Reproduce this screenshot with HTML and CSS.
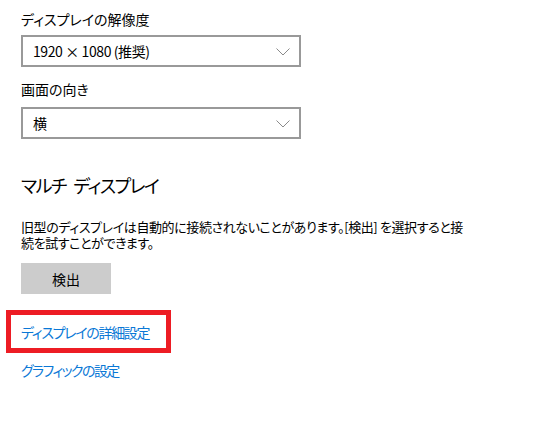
FILE: index.html
```html
<!DOCTYPE html>
<html lang="ja">
<head>
<meta charset="utf-8">
<link rel="stylesheet" href="styles.css">
</head>
<body>
<main class="page">
  <div class="field-label">ディスプレイの解像度</div>
  <div class="select first">
    <span class="select-value">1920 × 1080 (推奨)</span>
    <svg class="chevron" width="14" height="8" viewBox="0 0 14 8"><path d="M0.5 0.5 L7 7 L13.5 0.5" fill="none" stroke="#8a8a8a" stroke-width="1"/></svg>
  </div>
  <div class="field-label second">画面の向き</div>
  <div class="select">
    <span class="select-value">横</span>
    <svg class="chevron" width="14" height="8" viewBox="0 0 14 8"><path d="M0.5 0.5 L7 7 L13.5 0.5" fill="none" stroke="#8a8a8a" stroke-width="1"/></svg>
  </div>
  <h2 class="heading">マルチ ディスプレイ</h2>
  <p class="desc">旧型のディスプレイは自動的に接続されないことがあります。[検出] を選択すると接<br>続を試すことができます。</p>
  <button class="btn">検出</button>
  <div class="highlight">
    <a class="link" href="#">ディスプレイの詳細設定</a>
  </div>
  <a class="link plain" href="#">グラフィックの設定</a>
</main>
</body>
</html>
```
FILE: styles.css
```css
html, body {
  margin: 0;
  padding: 0;
  background: #ffffff;
}
body {
  font-family: "Noto Sans CJK JP", "Noto Sans", sans-serif;
  font-feature-settings: "palt";
  color: #000000;
  font-size: 14px;
}
.page {
  padding: 9px 0 0 21px;
  display: flex;
  flex-direction: column;
  align-items: flex-start;
}
.field-label {
  font-size: 14px;
  line-height: 20px;
  height: 20px;
}
.field-label.second {
  margin-top: 12px;
}
.select {
  margin-top: 8px;
  box-sizing: border-box;
  width: 280px;
  height: 32px;
  border: 2px solid #999999;
  display: flex;
  align-items: center;
  justify-content: space-between;
  padding: 0 9px 0 10px;
}
.select.first {
  margin-top: 6px;
}
.select-value {
  font-size: 14px;
  line-height: 20px;
  letter-spacing: -0.4px;
}
.chevron {
  display: block;
  margin-top: 1px;
}
.heading {
  margin: 32px 0 0;
  font-size: 18px;
  font-weight: normal;
  line-height: 28px;
  letter-spacing: -1.5px;
  word-spacing: 5px;
}
.desc {
  margin: 20px 0 0;
  font-size: 13px;
  line-height: 16px;
  letter-spacing: -0.4px;
}
.btn {
  margin-top: 12px;
  width: 90px;
  height: 31px;
  border: none;
  background: #cccccc;
  font-family: inherit;
  font-feature-settings: "palt";
  font-size: 14px;
  color: #000;
  padding: 0;
}
.highlight {
  margin: 16px 0 0 -15px;
  width: 165px;
  height: 43px;
  box-sizing: border-box;
  border: 5px solid #ed1c24;
  display: flex;
  align-items: center;
  padding-left: 10px;
}
.link {
  color: #0a78d6;
  text-decoration: none;
  font-size: 14px;
  line-height: 20px;
  letter-spacing: -1.3px;
}
.plain {
  margin-top: 7px;
  letter-spacing: -1.6px;
}
```
